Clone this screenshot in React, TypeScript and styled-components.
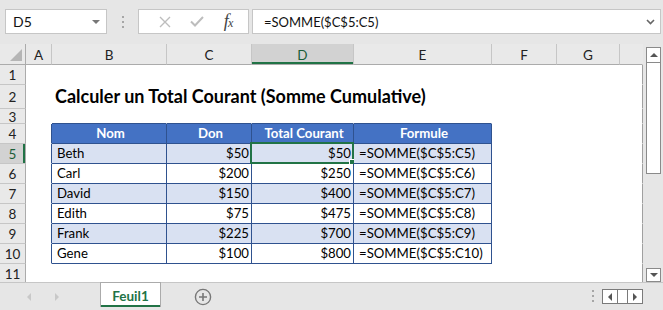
import styled, { createGlobalStyle } from "styled-components";

const GlobalStyle = createGlobalStyle`
  html, body { margin: 0; padding: 0; background: #e6e6e6; }
  body { font-family: Lato, "Liberation Sans", sans-serif; }
`;

const BLUE_LINE = "#2f528f";
const GREEN = "#217346";
const HEAD_BG = "#e9e9e9";
const HEAD_SEL = "#d2d2d2";
const EDGE = "#a0a0a0";

const Window = styled.div`
  width: 663px;
  height: 310px;
  background: #e6e6e6;
  display: flex;
  flex-direction: column;
  overflow: hidden;
`;

// formula bar

const FormulaBar = styled.div`
  height: 44px;
  box-sizing: border-box;
  padding: 9px 0 0 5px;
  display: flex;
  align-items: flex-start;
`;

const Box = styled.div<{ $w: number; $gap?: number }>`
  width: ${(p) => p.$w}px;
  height: 25px;
  margin-left: ${(p) => p.$gap ?? 0}px;
  box-sizing: border-box;
  background: #fff;
  border: 1px solid #c6c6c6;
  display: flex;
  align-items: center;
  font-size: 14px;
  color: #111;
`;

const NameText = styled.span`
  flex: 1;
  padding-left: 7px;
`;

const Caret = styled.span`
  width: 0;
  height: 0;
  border-left: 4px solid transparent;
  border-right: 4px solid transparent;
  border-top: 4px solid #777;
  margin-right: 6px;
`;

const Grip = styled.div`
  width: 31px;
  height: 25px;
  display: flex;
  flex-direction: column;
  align-items: center;
  justify-content: center;
  gap: 3px;

  span {
    width: 2px;
    height: 2px;
    background: #a6a6a6;
  }
`;

const FxIcons = styled.div`
  flex: 1;
  display: flex;
  align-items: center;
  justify-content: space-around;
  padding: 0 6px 0 10px;
`;

const Fx = styled.span`
  font-family: "Liberation Serif", serif;
  font-style: italic;
  font-size: 18px;
  color: #444;
  letter-spacing: -1px;

  sub {
    font-size: 12px;
    vertical-align: baseline;
  }
`;

const FormulaText = styled.span`
  flex: 1;
  padding-left: 11px;
  font-size: 13px;
`;

const Chevron = styled.svg`
  margin-right: 5px;
`;

// sheet

const SheetArea = styled.div`
  height: 238px;
  display: flex;
  overflow: hidden;
`;

const Grid = styled.div`
  width: 643px;
  display: grid;
  grid-template-columns: 26px 26px 115px 85px 102px 138px 65px 63px 23px;
  grid-template-rows: 21px 20px 24px 15px repeat(8, 20px);
  background: #fff;
`;

const Corner = styled.div`
  background: ${HEAD_BG};
  border-right: 1px solid #ababab;
  border-bottom: 1px solid #ababab;
  position: relative;

  &::after {
    content: "";
    position: absolute;
    right: 3px;
    bottom: 3px;
    border-left: 12px solid transparent;
    border-bottom: 12px solid #b5b5b5;
  }
`;

const ColHead = styled.div<{ $sel?: boolean; $last?: boolean }>`
  box-sizing: border-box;
  background: ${(p) => (p.$sel ? HEAD_SEL : HEAD_BG)};
  border-right: 1px solid ${(p) => (p.$last ? "transparent" : "#c6c6c6")};
  border-bottom: 1px solid #ababab;
  box-shadow: ${(p) => (p.$sel ? `inset 0 -2px 0 ${GREEN}` : "none")};
  display: flex;
  align-items: center;
  justify-content: center;
  padding-top: 1px;
  font-size: 13.5px;
  color: ${(p) => (p.$sel ? "#1b5e38" : "#222")};
`;

const RowHead = styled.div<{ $sel?: boolean }>`
  box-sizing: border-box;
  background: ${(p) => (p.$sel ? HEAD_SEL : HEAD_BG)};
  border-right: 1px solid #ababab;
  border-bottom: 1px solid #c6c6c6;
  box-shadow: ${(p) => (p.$sel ? `inset -2px 0 0 ${GREEN}` : "none")};
  display: flex;
  align-items: center;
  justify-content: center;
  padding-top: 1px;
  font-size: 13.5px;
  color: ${(p) => (p.$sel ? "#1b5e38" : "#222")};
`;

const Cell = styled.div<{
  $r?: string;
  $b?: string;
  $bg?: string;
  $align?: "left" | "right" | "center";
  $head?: boolean;
}>`
  box-sizing: border-box;
  position: relative;
  min-width: 0;
  border-right: 1px solid ${(p) => p.$r ?? "transparent"};
  border-bottom: 1px solid ${(p) => p.$b ?? "transparent"};
  background: ${(p) => p.$bg ?? "transparent"};
  display: flex;
  align-items: flex-end;
  justify-content: ${(p) =>
    p.$align === "right" ? "flex-end" : p.$align === "center" ? "center" : "flex-start"};
  padding: 0 2px 2px 5px;
  font-size: 13.2px;
  line-height: 16px;
  white-space: nowrap;
  color: ${(p) => (p.$head ? "#fff" : "#000")};
  font-weight: ${(p) => (p.$head ? 700 : 400)};
`;

const Title = styled.span`
  font-size: 18px;
  font-weight: 700;
  line-height: 20px;
  margin-left: -2px;
  margin-bottom: 0;
`;

const Selection = styled.div`
  position: absolute;
  left: -2px;
  top: -2px;
  right: -1px;
  bottom: -1px;
  border: 2px solid ${GREEN};
  pointer-events: none;

  &::after {
    content: "";
    position: absolute;
    right: -4px;
    bottom: -4px;
    width: 5px;
    height: 5px;
    background: ${GREEN};
    border: 1px solid #fff;
  }
`;

// vertical scrollbar

const VScroll = styled.div`
  width: 20px;
  box-sizing: border-box;
  padding: 3px 2px 0 3px;
  display: flex;
  flex-direction: column;
`;

const ScrollBtn = styled.div<{ $h: number }>`
  height: ${(p) => p.$h}px;
  box-sizing: border-box;
  background: #fff;
  border: 1px solid #8a8a8a;
  display: flex;
  align-items: center;
  justify-content: center;
`;

const Thumb = styled.div`
  height: 111px;
  box-sizing: border-box;
  background: #fff;
  border: 1px solid #8a8a8a;
  border-top: none;
`;

const Track = styled.div`
  flex: 1;
`;

const Tri = styled.span<{ $dir: "up" | "down" | "left" | "right"; $c?: string }>`
  width: 0;
  height: 0;
  ${(p) => {
    const c = p.$c ?? "#555";
    switch (p.$dir) {
      case "up":
        return `border-left:4px solid transparent;border-right:4px solid transparent;border-bottom:4px solid ${c};`;
      case "down":
        return `border-left:4px solid transparent;border-right:4px solid transparent;border-top:4px solid ${c};`;
      case "left":
        return `border-top:4px solid transparent;border-bottom:4px solid transparent;border-right:4px solid ${c};`;
      default:
        return `border-top:4px solid transparent;border-bottom:4px solid transparent;border-left:4px solid ${c};`;
    }
  }}
`;

// tab bar

const TabBar = styled.div`
  height: 28px;
  box-sizing: border-box;
  border-top: 1px solid #c6c6c6;
  display: flex;
  align-items: stretch;
`;

const TabNav = styled.div`
  width: 100px;
  display: flex;
  align-items: center;
  padding-left: 27px;
  gap: 24px;
  box-sizing: border-box;
`;

const Tab = styled.div`
  width: 61px;
  height: 25px;
  margin-top: -1px;
  padding-top: 1px;
  box-sizing: border-box;
  background: #fff;
  border: 1px solid #ababab;
  border-bottom: none;
  box-shadow: inset 0 -2px 0 ${GREEN};
  display: flex;
  align-items: center;
  justify-content: center;
  font-size: 13.5px;
  font-weight: 700;
  color: ${GREEN};
`;

const AddSheet = styled.div`
  width: 84px;
  display: flex;
  align-items: center;
  justify-content: center;
`;

const Spacer = styled.div`
  flex: 1;
`;

const Dots = styled(Grip)`
  width: 18px;
  height: 26px;
`;

const HScroll = styled.div`
  width: 41px;
  height: 15px;
  margin: 6px 20px 0 0;
  box-sizing: border-box;
  border: 1px solid #7a7a7a;
  background: #fff;
  display: grid;
  grid-template-columns: 14px 11px 1fr;

  & > div {
    display: flex;
    align-items: center;
    justify-content: center;
  }
  & > div:nth-child(2) {
    border-left: 1px solid #7a7a7a;
    border-right: 1px solid #7a7a7a;
  }
`;

type Row = { name: string; don: number; total: number; n: number };

const data: Row[] = [
  { name: "Beth", don: 50, total: 50, n: 5 },
  { name: "Carl", don: 200, total: 250, n: 6 },
  { name: "David", don: 150, total: 400, n: 7 },
  { name: "Edith", don: 75, total: 475, n: 8 },
  { name: "Frank", don: 225, total: 700, n: 9 },
  { name: "Gene", don: 100, total: 800, n: 10 },
];

const columns = ["A", "B", "C", "D", "E", "F", "G", ""];

function EmptyRow({ n }: { n: number }) {
  return (
    <>
      <RowHead>{n}</RowHead>
      {columns.map((_, i) => (
        <Cell key={i} $r={i === 7 ? EDGE : undefined} />
      ))}
    </>
  );
}

export default function App() {
  return (
    <>
      <GlobalStyle />
      <Window>
        <FormulaBar>
          <Box $w={102}>
            <NameText>D5</NameText>
            <Caret />
          </Box>
          <Grip>
            <span />
            <span />
            <span />
          </Grip>
          <Box $w={111}>
            <FxIcons>
              <svg width="12" height="12" viewBox="0 0 12 12">
                <path d="M1 1L11 11M11 1L1 11" stroke="#bdbdbd" strokeWidth="1.4" />
              </svg>
              <svg width="14" height="11" viewBox="0 0 14 11">
                <path d="M1 5.5L5 9.5L13 1" stroke="#bdbdbd" strokeWidth="2" fill="none" />
              </svg>
              <Fx>
                f<sub>x</sub>
              </Fx>
            </FxIcons>
          </Box>
          <Box $w={409} $gap={3}>
            <FormulaText>=SOMME($C$5:C5)</FormulaText>
            <Chevron width="9" height="6" viewBox="0 0 9 6">
              <path d="M1 1L4.5 4.5L8 1" stroke="#666" strokeWidth="1.6" fill="none" />
            </Chevron>
          </Box>
        </FormulaBar>

        <SheetArea>
          <Grid>
            <Corner />
            {columns.map((c, i) => (
              <ColHead key={i} $sel={c === "D"} $last={i === 7}>
                {c}
              </ColHead>
            ))}

            <EmptyRow n={1} />

            <RowHead>2</RowHead>
            <Cell />
            <Cell>
              <Title>Calculer un Total Courant (Somme Cumulative)</Title>
            </Cell>
            <Cell />
            <Cell />
            <Cell />
            <Cell />
            <Cell />
            <Cell $r={EDGE} />

            <RowHead>3</RowHead>
            <Cell />
            <Cell $b={BLUE_LINE} />
            <Cell $b={BLUE_LINE} />
            <Cell $b={BLUE_LINE} />
            <Cell $b={BLUE_LINE} />
            <Cell />
            <Cell />
            <Cell $r={EDGE} />

            <RowHead>4</RowHead>
            <Cell $r={BLUE_LINE} />
            {["Nom", "Don", "Total Courant", "Formule"].map((h) => (
              <Cell key={h} $head $bg="#4472c4" $r={BLUE_LINE} $b={BLUE_LINE} $align="center">
                {h}
              </Cell>
            ))}
            <Cell />
            <Cell />
            <Cell $r={EDGE} />

            {data.map((r, i) => {
              const bg = i % 2 === 0 ? "#d9e1f2" : "#fff";
              const sel = r.n === 5;
              return [
                <RowHead key={`h${r.n}`} $sel={sel}>
                  {r.n}
                </RowHead>,
                <Cell key={`a${r.n}`} $r={BLUE_LINE} />,
                <Cell key={`b${r.n}`} $bg={bg} $r={BLUE_LINE} $b={BLUE_LINE}>
                  {r.name}
                </Cell>,
                <Cell key={`c${r.n}`} $bg={bg} $r={BLUE_LINE} $b={BLUE_LINE} $align="right">
                  ${r.don}
                </Cell>,
                <Cell key={`d${r.n}`} $bg={bg} $r={BLUE_LINE} $b={BLUE_LINE} $align="right">
                  ${r.total}
                  {sel && <Selection />}
                </Cell>,
                <Cell key={`e${r.n}`} $bg={bg} $r={BLUE_LINE} $b={BLUE_LINE}>
                  =SOMME($C$5:C{r.n})
                </Cell>,
                <Cell key={`f${r.n}`} />,
                <Cell key={`g${r.n}`} />,
                <Cell key={`x${r.n}`} $r={EDGE} />,
              ];
            })}

            <EmptyRow n={11} />
          </Grid>

          <VScroll>
            <ScrollBtn $h={16}>
              <Tri $dir="up" />
            </ScrollBtn>
            <Thumb />
            <Track />
            <ScrollBtn $h={14}>
              <Tri $dir="down" />
            </ScrollBtn>
          </VScroll>
        </SheetArea>

        <TabBar>
          <TabNav>
            <Tri $dir="left" $c="#c8c8c8" />
            <Tri $dir="right" $c="#c8c8c8" />
          </TabNav>
          <Tab>Feuil1</Tab>
          <AddSheet>
            <svg width="18" height="18" viewBox="0 0 18 18">
              <circle cx="9" cy="9" r="7.6" stroke="#777" strokeWidth="1.4" fill="none" />
              <path d="M9 5V13M5 9H13" stroke="#777" strokeWidth="1.6" />
            </svg>
          </AddSheet>
          <Spacer />
          <Dots>
            <span />
            <span />
            <span />
          </Dots>
          <HScroll>
            <div>
              <Tri $dir="left" $c="#555" />
            </div>
            <div />
            <div>
              <Tri $dir="right" $c="#555" />
            </div>
          </HScroll>
        </TabBar>
      </Window>
    </>
  );
}
